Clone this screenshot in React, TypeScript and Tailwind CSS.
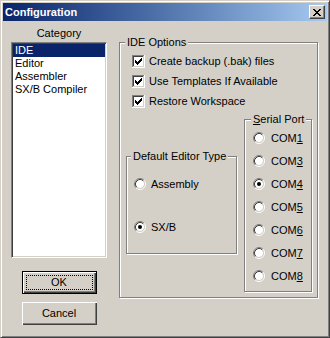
import React from "react";

const CheckBox = () => (
  <svg width="13" height="13" viewBox="0 0 13 13" shapeRendering="crispEdges" className="shrink-0">
    <rect x="0" y="0" width="13" height="13" fill="#fff" />
    <rect x="0" y="0" width="12" height="1" fill="#808080" />
    <rect x="0" y="0" width="1" height="12" fill="#808080" />
    <rect x="1" y="1" width="10" height="1" fill="#404040" />
    <rect x="1" y="1" width="1" height="10" fill="#404040" />
    <rect x="1" y="11" width="11" height="1" fill="#d4d0c8" />
    <rect x="11" y="1" width="1" height="11" fill="#d4d0c8" />
    <rect x="9" y="3" width="1" height="1" fill="#000" />
    <rect x="8" y="4" width="2" height="1" fill="#000" />
    <rect x="3" y="5" width="1" height="1" fill="#000" />
    <rect x="7" y="5" width="3" height="1" fill="#000" />
    <rect x="3" y="6" width="2" height="1" fill="#000" />
    <rect x="6" y="6" width="3" height="1" fill="#000" />
    <rect x="3" y="7" width="5" height="1" fill="#000" />
    <rect x="4" y="8" width="3" height="1" fill="#000" />
    <rect x="5" y="9" width="1" height="1" fill="#000" />
  </svg>
);

const Radio = ({ checked }: { checked?: boolean }) => (
  <svg width="12" height="12" viewBox="0 0 12 12" className="shrink-0">
    <path d="M2.11 9.89A5.5 5.5 0 0 1 9.89 2.11" stroke="#808080" fill="none" />
    <path d="M9.89 2.11A5.5 5.5 0 0 1 2.11 9.89" stroke="#fff" fill="none" />
    <circle cx="6" cy="6" r="4" fill="#fff" />
    <path d="M2.82 9.18A4.5 4.5 0 0 1 9.18 2.82" stroke="#404040" fill="none" />
    <path d="M9.18 2.82A4.5 4.5 0 0 1 2.82 9.18" stroke="#d4d0c8" fill="none" />
    {checked && <circle cx="6" cy="6" r="2" fill="#000" />}
  </svg>
);

const CheckRow = ({ label }: { label: string }) => (
  <div className="flex items-center gap-[4px] h-[13px]">
    <CheckBox />
    <span className="whitespace-nowrap">{label}</span>
  </div>
);

const RadioRow = ({ children, checked, gap }: { children: React.ReactNode; checked?: boolean; gap: string }) => (
  <div className={"flex items-center h-[12px] " + gap}>
    <Radio checked={checked} />
    <span className="whitespace-nowrap">{children}</span>
  </div>
);

const Group = ({
  label,
  className,
  labelClass,
  children,
}: {
  label: React.ReactNode;
  className: string;
  labelClass: string;
  children?: React.ReactNode;
}) => (
  <div className={"relative shrink-0 border border-[#808080] shadow-[inset_1px_1px_0_#fff,1px_1px_0_#fff] " + className}>
    <span className={"absolute top-[-7px] bg-[#d4d0c8] px-[2px] leading-[13px] whitespace-nowrap " + labelClass}>{label}</span>
    {children}
  </div>
);

const CloseGlyph = () => (
  <svg width="8" height="7" viewBox="0 0 8 7" shapeRendering="crispEdges">
    <rect x="0" y="0" width="2" height="1" fill="#000" />
    <rect x="6" y="0" width="2" height="1" fill="#000" />
    <rect x="1" y="1" width="2" height="1" fill="#000" />
    <rect x="5" y="1" width="2" height="1" fill="#000" />
    <rect x="2" y="2" width="4" height="1" fill="#000" />
    <rect x="3" y="3" width="2" height="1" fill="#000" />
    <rect x="2" y="4" width="4" height="1" fill="#000" />
    <rect x="1" y="5" width="2" height="1" fill="#000" />
    <rect x="5" y="5" width="2" height="1" fill="#000" />
    <rect x="0" y="6" width="2" height="1" fill="#000" />
    <rect x="6" y="6" width="2" height="1" fill="#000" />
  </svg>
);

export default function App() {
  const ports = [
    { n: "1", checked: false },
    { n: "3", checked: false },
    { n: "4", checked: true },
    { n: "5", checked: false },
    { n: "6", checked: false },
    { n: "7", checked: false },
    { n: "8", checked: false },
  ];
  return (
    <div className="w-[330px] h-[338px] bg-[#d4d0c8] border border-t-[#d4d0c8] border-l-[#d4d0c8] border-r-[#404040] border-b-[#404040] shadow-[inset_1px_1px_0_#fff,inset_-1px_-1px_0_#808080] p-[2px] font-['Liberation_Sans',Arial,sans-serif] text-[11px] leading-[13px] text-black flex flex-col select-none">
      {/* Title bar */}
      <div className="h-[18px] shrink-0 flex items-center justify-between bg-linear-to-r from-[#0a246a] to-[#a6caf0] pl-[2px] pr-[2px]">
        <span className="text-white font-bold text-[11px] leading-[13px]">Configuration</span>
        <div className="w-[16px] h-[14px] bg-[#d4d0c8] border border-t-[#fff] border-l-[#fff] border-r-[#404040] border-b-[#404040] shadow-[inset_-1px_-1px_0_#808080] flex items-center justify-center">
          <CloseGlyph />
        </div>
      </div>

      {/* Body */}
      <div className="flex pl-[8px]">
        {/* Left column */}
        <div className="w-[96px] shrink-0 flex flex-col items-center">
          <div className="mt-[6px] h-[13px] text-center w-full">Category</div>
          <div className="mt-[2px] w-[96px] h-[216px] bg-white border border-t-[#808080] border-l-[#808080] border-r-white border-b-white shadow-[inset_1px_1px_0_#404040,inset_-1px_-1px_0_#d4d0c8] p-[1px] flex flex-col">
            <div className="h-[13px] bg-[#0a246a] text-white pl-[2px]">IDE</div>
            <div className="h-[13px] pl-[2px]">Editor</div>
            <div className="h-[13px] pl-[2px]">Assembler</div>
            <div className="h-[13px] pl-[2px]">SX/B Compiler</div>
          </div>
          <div className="mt-[13px] relative w-[75px] h-[23px] border border-black shadow-[inset_1px_1px_0_#fff,inset_-1px_-1px_0_#404040,inset_-2px_-2px_0_#808080] flex items-center justify-center">
            <div className="absolute inset-[3px] border border-dotted border-black" />
            <span>OK</span>
          </div>
          <div className="mt-[8px] w-[75px] h-[23px] shadow-[inset_1px_1px_0_#fff,inset_-1px_-1px_0_#404040,inset_-2px_-2px_0_#808080] flex items-center justify-center">
            <span>Cancel</span>
          </div>
        </div>

        {/* Right group */}
        <Group label="IDE Options" className="ml-[12px] mt-[21px] w-[199px] h-[256px]" labelClass="left-[5px]">
          <div className="flex flex-col pt-[12px] pl-[6px]">
            <div className="flex flex-col gap-[7px] pl-[6px]">
              <CheckRow label="Create backup (.bak) files" />
              <CheckRow label="Use Templates If Available" />
              <CheckRow label="Restore Workspace" />
            </div>
            <div className="flex items-start mt-[11px]">
              <Group label="Default Editor Type" className="mt-[37px] w-[111px] h-[98px]" labelClass="left-[4px]">
                <div className="flex flex-col pl-[7px] pt-[21px] gap-[31px]">
                  <RadioRow gap="gap-[5px]">Assembly</RadioRow>
                  <RadioRow gap="gap-[5px]" checked>
                    SX/B
                  </RadioRow>
                </div>
              </Group>
              <Group
                label={
                  <>
                    <span className="underline">S</span>erial Port
                  </>
                }
                className="ml-[7px] w-[68px] h-[173px]"
                labelClass="left-[6px]"
              >
                <div className="flex flex-col pl-[8px] pt-[12px] gap-[11px]">
                  {ports.map((p) => (
                    <RadioRow key={p.n} gap="gap-[6px]" checked={p.checked}>
                      COM<span className="underline">{p.n}</span>
                    </RadioRow>
                  ))}
                </div>
              </Group>
            </div>
          </div>
        </Group>
      </div>
    </div>
  );
}
